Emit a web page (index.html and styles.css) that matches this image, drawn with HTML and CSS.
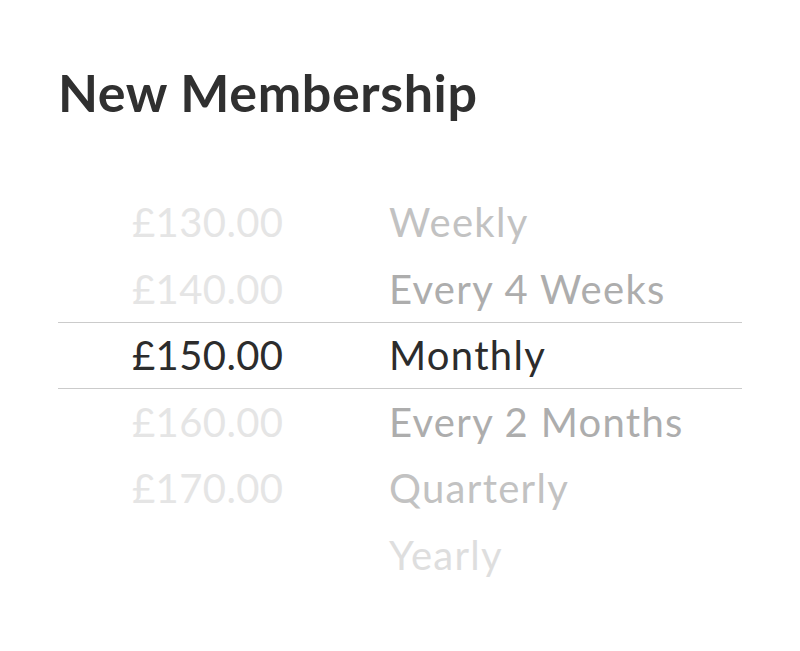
FILE: index.html
```html
<!DOCTYPE html>
<html>
<head>
<meta charset="utf-8">
<link rel="stylesheet" href="styles.css">
</head>
<body>
<div class="page">
  <h1 class="title">New Membership</h1>
  <div class="picker">
    <div class="row"><span class="price p-far">£130.00</span><span class="label l-mid">Weekly</span></div>
    <div class="row"><span class="price p-far">£140.00</span><span class="label l-near">Every 4 Weeks</span></div>
    <div class="row selected"><span class="price">£150.00</span><span class="label">Monthly</span></div>
    <div class="row"><span class="price p-far">£160.00</span><span class="label l-near">Every 2 Months</span></div>
    <div class="row"><span class="price p-far">£170.00</span><span class="label l-mid">Quarterly</span></div>
    <div class="row"><span class="price p-far"></span><span class="label l-far">Yearly</span></div>
  </div>
</div>
</body>
</html>
```

FILE: styles.css
```css
html, body {
  margin: 0;
  padding: 0;
  background: #ffffff;
}
body {
  font-family: Lato, "Noto Sans", sans-serif;
  color: #2e2e2e;
}
.page {
  padding: 62px 58px 0 58px;
}
.title {
  margin: 0;
  font-size: 52px;
  font-weight: 700;
  line-height: 60px;
  letter-spacing: 0.6px;
  color: #303030;
}
.picker {
  margin-top: 67px;
}
.row {
  display: grid;
  grid-template-columns: 257px 1fr;
  height: 66.5px;
  align-items: center;
  padding-left: 74px;
  font-size: 40px;
  box-sizing: border-box;
}
.price {
  letter-spacing: 0.4px;
}
.label {
  letter-spacing: 1.3px;
}
.row.selected {
  border-top: 1.5px solid #cbcbcb;
  border-bottom: 1.5px solid #cbcbcb;
  color: #2c2c2c;
}
.p-far { color: #e5e5e5; }
.l-near { color: #adadad; }
.l-mid { color: #c2c2c2; }
.l-far { color: #dedede; }
```
